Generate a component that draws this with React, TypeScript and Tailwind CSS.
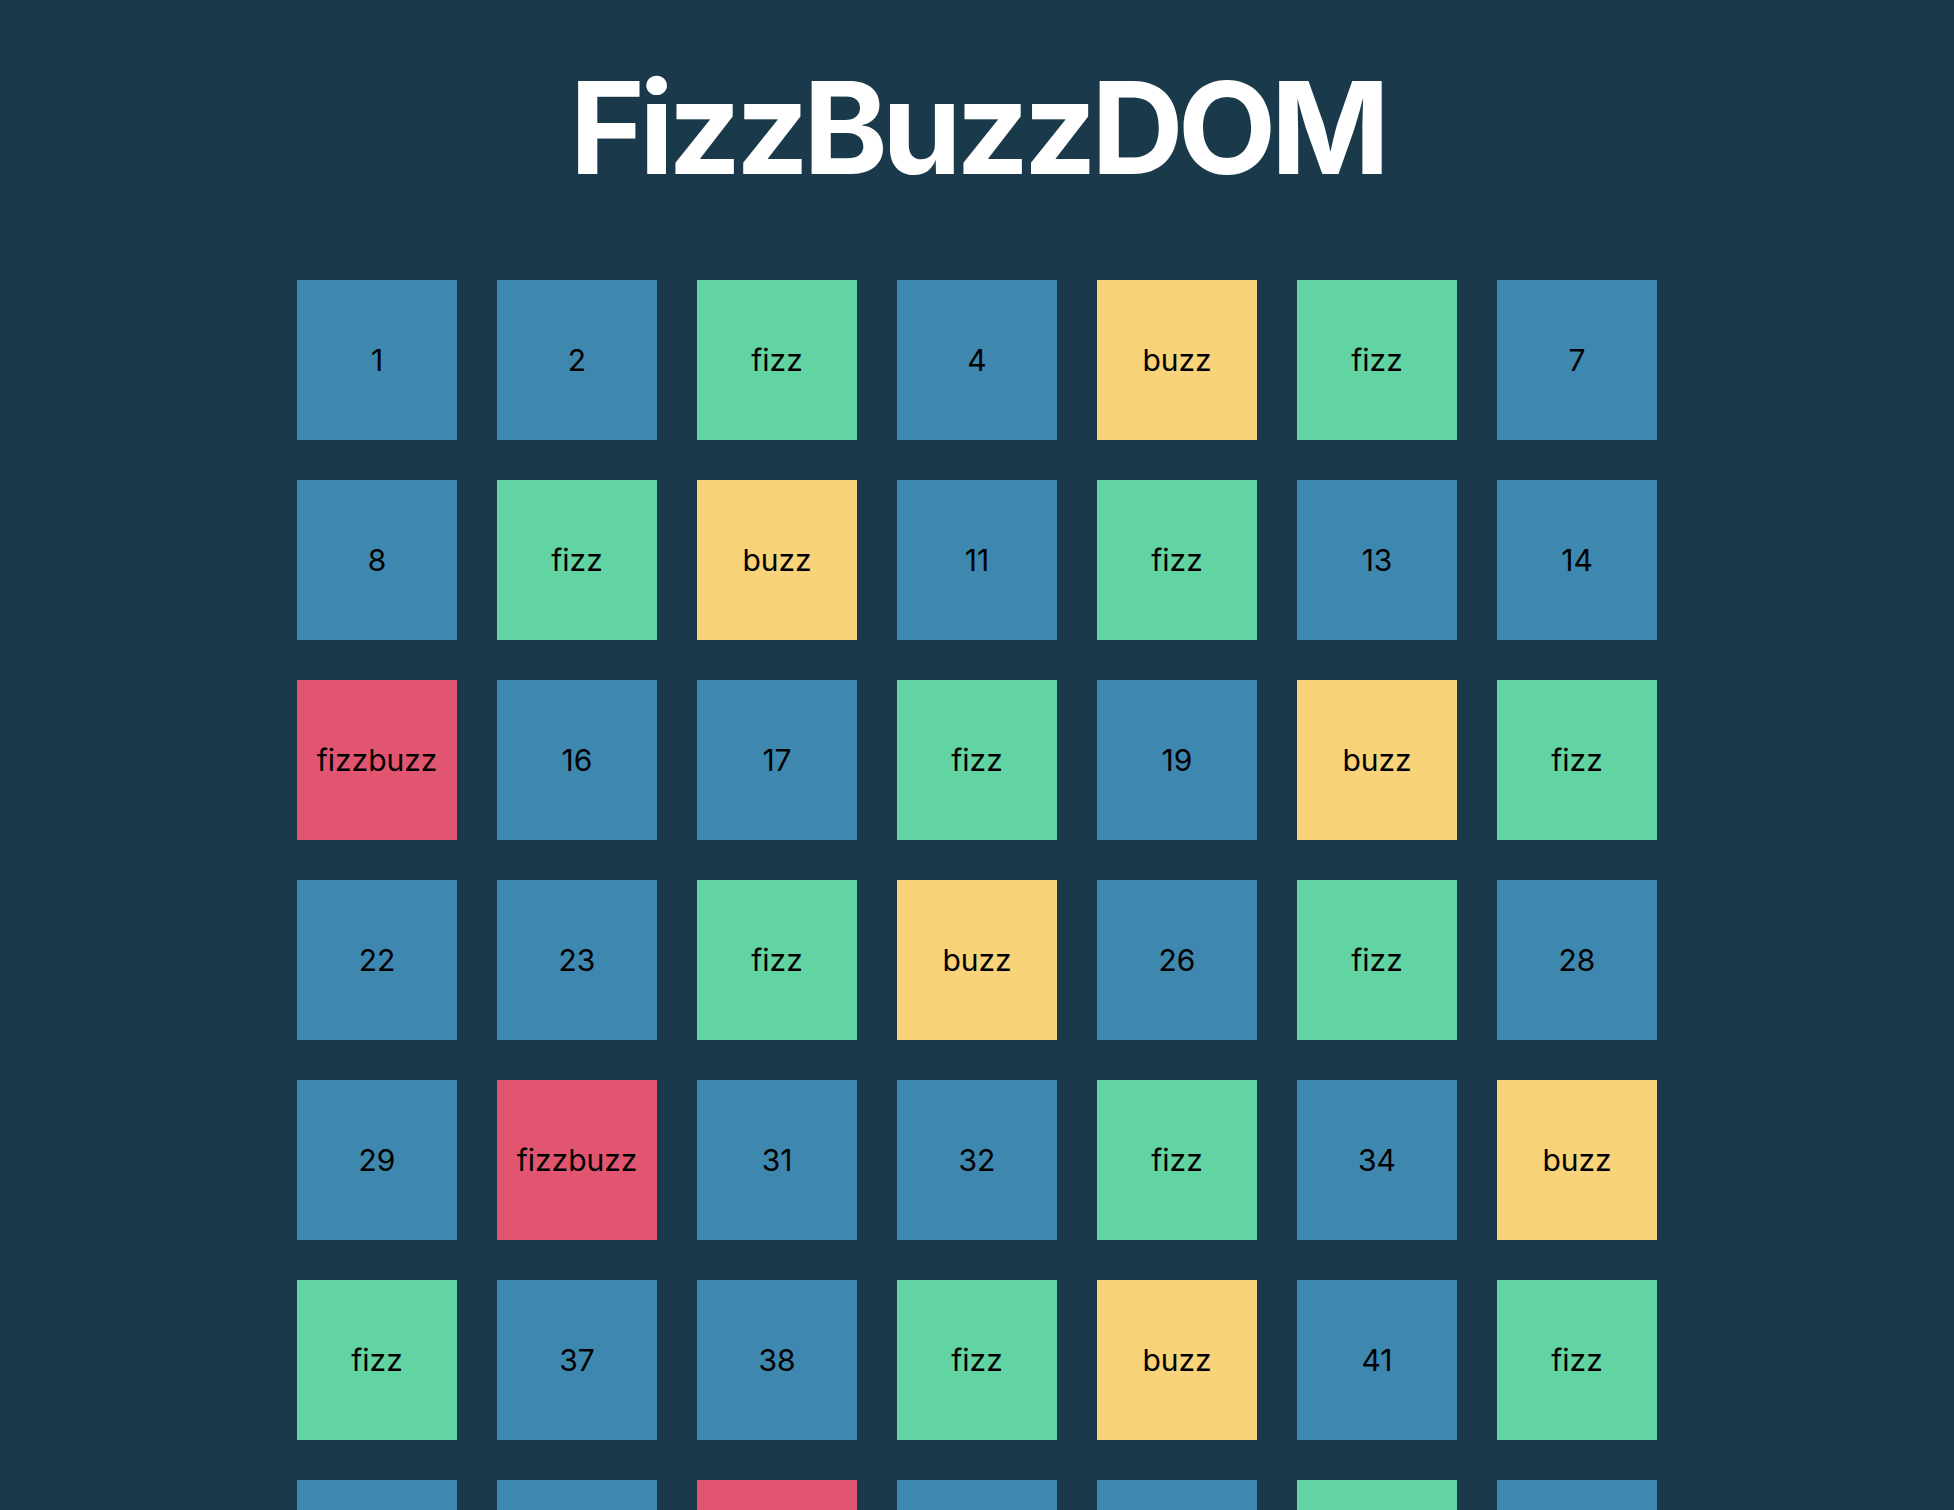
const tiles = Array.from({ length: 100 }, (_, i) => {
  const n = i + 1;
  if (n % 15 === 0) return { n, label: "fizzbuzz", color: "bg-[#e15570]" };
  if (n % 3 === 0) return { n, label: "fizz", color: "bg-[#62d3a3]" };
  if (n % 5 === 0) return { n, label: "buzz", color: "bg-[#f9d379]" };
  return { n, label: String(n), color: "bg-[#3e88b0]" };
});

export default function App() {
  return (
    <div className="min-h-screen bg-[#1a3a4c] pt-[64px] pb-20 font-['Inter',sans-serif]">
      <h1 className="text-center text-[128px] font-bold leading-none tracking-[-0.045em] text-white">
        FizzBuzzDOM
      </h1>

      {/* 7 tiles per row, 160px squares with 40px gutters */}
      <div className="mx-auto mt-[88px] grid w-[1360px] grid-cols-7 gap-[40px]">
        {tiles.map((t) => (
          <div
            key={t.n}
            className={`flex h-[160px] w-[160px] items-center justify-center text-[30px] text-black ${t.color}`}
          >
            {t.label}
          </div>
        ))}
      </div>
    </div>
  );
}
